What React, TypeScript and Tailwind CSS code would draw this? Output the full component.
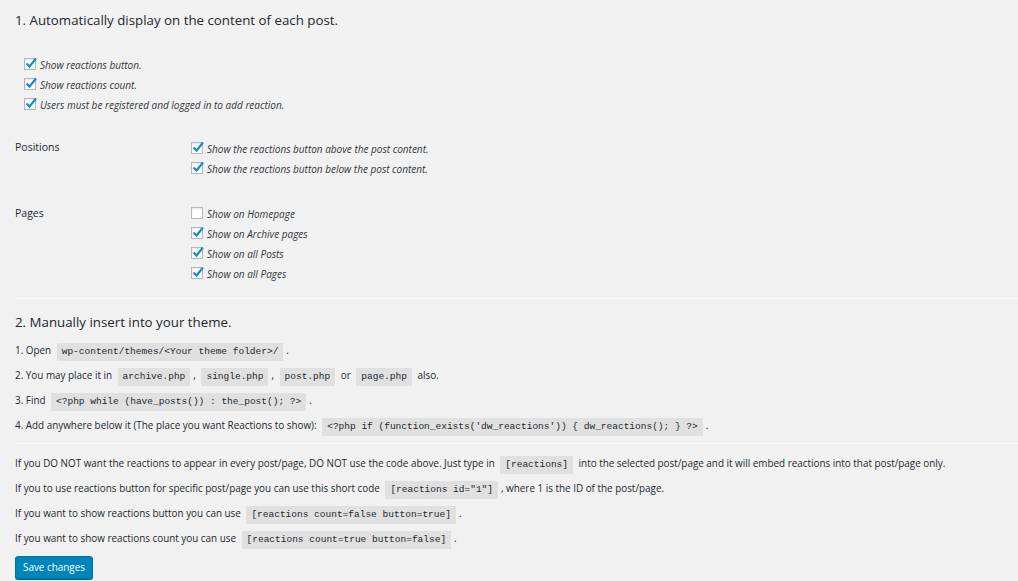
import React from 'react'

const Check = ({ checked, label }: { checked: boolean; label: string }) => (
	<label className="flex items-center h-[20px] gap-[4px]">
		<span className="relative w-[12px] h-[12px] border border-[#b4b9be] bg-white shadow-[inset_0_1px_2px_rgba(0,0,0,0.1)] shrink-0">
			{checked && (
				<svg className="absolute left-[-1px] top-[-3px]" width="14" height="14" viewBox="0 0 14 14">
					<path d="M2.5 7.5 L5.5 10.5 L12 2.5" fill="none" stroke="#1e8cbe" strokeWidth="2.2" />
				</svg>
			)}
		</span>
		<span className="italic text-[10px] text-[#32373c] translate-y-[1px]">{label}</span>
	</label>
)

const Code = ({ children }: { children: React.ReactNode }) => (
	<code className="bg-[#e0e0e0] px-[5px] py-[2px] mx-[3px] font-['Liberation_Mono',monospace] text-[9.5px] leading-[14px] inline-block">
		{children}
	</code>
)

const Row = ({ children }: { children: React.ReactNode }) => (
	<p className="h-[25px] flex items-center">
		<span>{children}</span>
	</p>
)

export default function App() {
	return (
		<div className="min-h-screen bg-[#f1f1f1] text-[#23282d] font-['Open_Sans',sans-serif] text-[9.9px] pl-[15px] pt-[10px]">
			<h2 className="text-[13.3px] leading-[20px] font-normal">1. Automatically display on the content of each post.</h2>

			<div className="pl-[9px] mt-[24px]">
				<Check checked label="Show reactions button." />
				<Check checked label="Show reactions count." />
				<Check checked label="Users must be registered and logged in to add reaction." />
			</div>

			<div className="flex mt-[24px]">
				<div className="w-[176px] text-[10.5px] leading-[16px] pt-[1px]">Positions</div>
				<div>
					<Check checked label="Show the reactions button above the post content." />
					<Check checked label="Show the reactions button below the post content." />
				</div>
			</div>

			<div className="flex mt-[25px]">
				<div className="w-[176px] text-[10.5px] leading-[16px] pt-[2px]">Pages</div>
				<div>
					<Check checked={false} label="Show on Homepage" />
					<Check checked label="Show on Archive pages" />
					<Check checked label="Show on all Posts" />
					<Check checked label="Show on all Pages" />
				</div>
			</div>

			<hr className="mt-[15px] border-0 border-t border-[#fafafa]" />

			<h2 className="mt-[13px] text-[13.3px] leading-[20px] font-normal">2. Manually insert into your theme.</h2>

			<div className="mt-[7px]">
				<Row>
					1. Open <Code>wp-content/themes/&lt;Your theme folder&gt;/</Code>.
				</Row>
				<Row>
					2. You may place it in <Code>archive.php</Code>, <Code>single.php</Code>, <Code>post.php</Code> or{' '}
					<Code>page.php</Code> also.
				</Row>
				<Row>
					3. Find <Code>&lt;?php while (have_posts()) : the_post(); ?&gt;</Code>.
				</Row>
				<Row>
					4. Add anywhere below it (The place you want Reactions to show):{' '}
					<Code>&lt;?php if (function_exists('dw_reactions')) {'{'} dw_reactions(); {'}'} ?&gt;</Code>.
				</Row>
			</div>

			<hr className="mt-[4px] border-0 border-t border-[#fafafa]" />

			<div className="mt-[8px]">
				<Row>
					If you DO NOT want the reactions to appear in every post/page, DO NOT use the code above. Just type in{' '}
					<Code>[reactions]</Code> into the selected post/page and it will embed reactions into that post/page only.
				</Row>
				<Row>
					If you to use reactions button for specific post/page you can use this short code{' '}
					<Code>[reactions id="1"]</Code>, where 1 is the ID of the post/page.
				</Row>
				<Row>
					If you want to show reactions button you can use <Code>[reactions count=false button=true]</Code>.
				</Row>
				<Row>
					If you want to show reactions count you can use <Code>[reactions count=true button=false]</Code>.
				</Row>
			</div>

			<button className="mt-[4px] h-[23px] px-[7px] bg-[#0085ba] border border-[#0073aa] rounded-[3px] text-white text-[9.9px] shadow-[0_1px_0_#006799]">
				Save changes
			</button>
		</div>
	)
}
